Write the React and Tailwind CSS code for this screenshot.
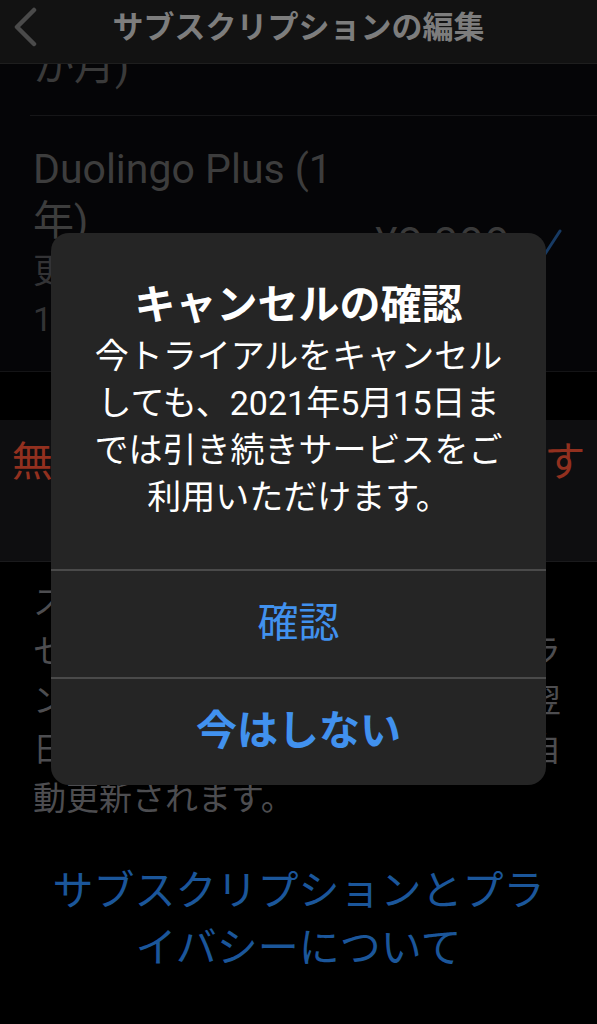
const FONT = "font-['Roboto','Noto_Sans_CJK_JP',sans-serif]";

const Chevron = () => (
  <svg width="26" height="40" viewBox="0 0 26 40" fill="none" stroke="#4a4a4a" strokeWidth="4.5" strokeLinecap="round" strokeLinejoin="round">
    <polyline points="22,3 5,20 22,37" />
  </svg>
);

const Check = () => (
  <svg width="26" height="28" viewBox="0 0 26 28" fill="none" stroke="#173a63" strokeWidth="3" strokeLinecap="round" strokeLinejoin="round">
    <polyline points="2,15 9,25 24,2" />
  </svg>
);

const NavBar = () => (
  <header className="grid grid-cols-[1fr_auto_1fr] h-[64px] bg-[#121212] border-b border-[#1e1e1e]">
    <div className="flex items-start pl-[12px] pt-[7px]">
      <Chevron />
    </div>
    <h1 className="pt-[8px] text-[31px] leading-[40px] font-bold text-[#7d7d7d]">サブスクリプションの編集</h1>
    <div />
  </header>
);

const PlanList = () => (
  <section className="bg-[#050507] border-b border-[#141416]">
    {/* previous row, scrolled under the nav bar */}
    <div className="h-[51px] overflow-hidden pl-[33px]">
      <p className="-mt-[23px] text-[41px] leading-[50px] text-[#3a3a3a]">か月)</p>
    </div>
    <div className="h-px ml-[30px] bg-[#161618]" />
    <div className="flex items-center pl-[33px] pr-[35px] pt-[27px] pb-[28px]">
      <div className="flex-1 min-w-0">
        <p className="text-[41px] leading-[52px] text-[#3d3d3d]">
          Duolingo Plus (1<br />年)
        </p>
        <p className="text-[34px] leading-[48px] text-[#333335] whitespace-nowrap">
          更新日：5月15日<br />1年ごとに更新
        </p>
      </div>
      <span className="font-['Inter','Noto_Sans_CJK_JP',sans-serif] text-[41px] text-[#3a3a3a]">¥9,800</span>
      <div className="ml-[26px]">
        <Check />
      </div>
    </div>
  </section>
);

const Footer = () => (
  <>
    <div className="pl-[33px] pt-[16px] text-[33px] leading-[49px] text-[#4d4d50] whitespace-nowrap">
      <div>スタンダードの無料体験をキャン</div>
      <div>セルしない場合は終了後に有料プラ</div>
      <div>ンへ移行し、料金は体験終了日の翌</div>
      <div>日に請求され、以降毎年同じ日に自</div>
      <div>動更新されます。</div>
    </div>
    <p className="pt-[40px] text-center text-[41px] leading-[57px] text-[#1b569a]">
      サブスクリプションとプラ<br />イバシーについて
    </p>
  </>
);

const Alert = () => (
  <div className="absolute inset-0 flex items-center justify-center pb-[6px]">
    <div className="w-[495px] rounded-[18px] bg-[#252525] overflow-hidden text-center">
      <div className="h-[336px] pt-[47px]">
        <h2 className="text-[41px] leading-[50px] font-bold text-white">キャンセルの確認</h2>
        <p className="mt-[3px] text-[34px] leading-[47px] text-white">
          今トライアルをキャンセル<br />
          しても、2021年5月15日ま<br />
          では引き続きサービスをご<br />
          利用いただけます。
        </p>
      </div>
      <div className="h-[2px] bg-[#4a4a4a]" />
      <button className="flex items-center justify-center w-full h-[106px] text-[41px] text-[#4191ee]">確認</button>
      <div className="h-[2px] bg-[#4a4a4a]" />
      <button className="flex items-center justify-center w-full h-[106px] text-[41px] font-bold text-[#4191ee]">今はしない</button>
    </div>
  </div>
);

export default function App() {
  return (
    <main className={`relative h-[1024px] overflow-hidden bg-black ${FONT}`}>
      <NavBar />
      <PlanList />
      <div className="h-[48px]" />
      <div className="bg-[#0e0e10] border-b border-[#1a1a1c] pt-[17px] pb-[24px] text-center text-[41px] leading-[50px] text-[#92301f]">
        無料トライアルをキャンセルする
      </div>
      <Footer />
      <Alert />
    </main>
  );
}
